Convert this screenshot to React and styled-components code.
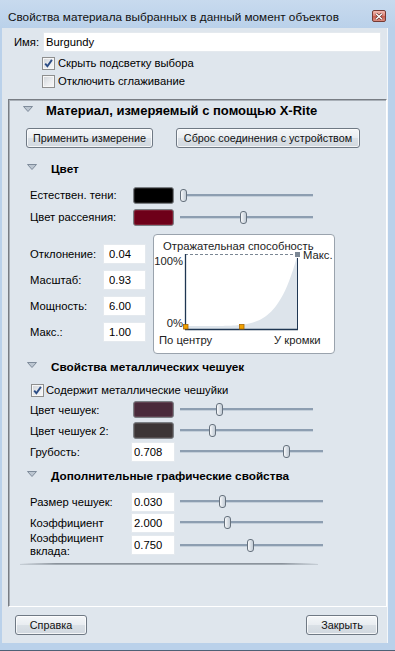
import React from 'react';
import styled, { createGlobalStyle } from 'styled-components';

const GlobalStyle = createGlobalStyle`
  html, body { margin: 0; padding: 0; }
  body {
    font-family: "Liberation Sans", Arial, sans-serif;
    font-size: 11.25px;
    color: #000;
    background: #bad1ea;
  }
  * { box-sizing: border-box; }
`;

const Window = styled.div`
  width: 395px;
  height: 651px;
  display: flex;
  flex-direction: column;
  background: #bad1ea;
  border-bottom: 1px solid #4e6176;
  overflow: hidden;
`;

const TitleBar = styled.div`
  flex: 0 0 28px;
  display: flex;
  align-items: center;
  justify-content: space-between;
  padding: 4px 9px 0 8px;
  background: linear-gradient(#c8daee, #bad1ea);
  font-size: 11.75px;
  color: #111;
  white-space: nowrap;
`;

const CloseBtn = styled.div`
  width: 14px;
  height: 12px;
  border: 1px solid #763a33;
  border-radius: 2px;
  background: linear-gradient(#f2b9b0, #dc8174 50%, #c95b4c 51%, #d98c80);
  display: flex;
  align-items: center;
  justify-content: center;
`;

const Client = styled.div`
  flex: 1;
  margin: 0 7px 7px 2px;
  background: #dfe6ed;
  display: flex;
  flex-direction: column;
  padding: 4px 0 8px 0;
  box-shadow: inset -1px 0 0 #f4f7fa;
`;

const NameRow = styled.div`
  height: 20px;
  display: flex;
  align-items: center;
  padding-left: 12px;
`;

const NameLabel = styled.span`
  width: 29px;
  flex: none;
`;

const TextField = styled.input`
  width: ${p => p.$w}px;
  height: ${p => p.$h || 20}px;
  flex: none;
  margin: 0;
  border: 1px solid #e4e9ee;
  background: #fff;
  font: inherit;
  color: #000;
  padding: 0 0 0 ${p => p.$pl ?? 2}px;
  outline: none;
`;

const CheckRow = styled.div`
  height: 18px;
  display: flex;
  align-items: center;
  gap: ${p => p.$gap ?? 3}px;
  padding-left: ${p => p.$pl}px;
  margin-top: ${p => p.$mt || 0}px;
`;

const CheckBoxFrame = styled.span`
  width: 13px;
  height: 13px;
  flex: none;
  border: 1px solid #8e8f8f;
  background: linear-gradient(135deg, #cfd3d8 0%, #eceef0 60%, #f8f8f8 100%);
  box-shadow: inset 0 0 0 1px #f7f7f7;
  display: flex;
  align-items: center;
  justify-content: center;
`;

const Panel = styled.div`
  flex: 1;
  margin: 9px 1px 0 6px;
  border: 1px solid;
  border-color: #787d84 #ffffff #ffffff #787d84;
  box-shadow: inset 1px 1px 0 #a9b0b8;
  display: flex;
  flex-direction: column;
  min-height: 0;
`;

const Header = styled.div`
  height: 20px;
  flex: none;
  display: flex;
  align-items: center;
  gap: ${p => p.$gap}px;
  padding-left: ${p => p.$pl}px;
  margin-top: ${p => p.$mt || 0}px;
  font-weight: bold;
  font-size: ${p => p.$size || 11.75}px;
`;

const TriIcon = styled.svg`
  flex: none;
  margin-bottom: 2px;
`;

const ActionRow = styled.div`
  height: 20px;
  display: flex;
  gap: 23px;
  padding-left: 17px;
  margin-top: 8px;
`;

const Button = styled.div`
  width: ${p => p.$w}px;
  height: 20px;
  flex: none;
  border: 1px solid #6f7984;
  border-radius: 3px;
  background: linear-gradient(#f5f7f9 0%, #e9edf1 48%, #dae0e6 52%, #d1d8df 100%);
  box-shadow: inset 0 0 0 1px rgba(255, 255, 255, 0.75);
  display: flex;
  align-items: center;
  justify-content: center;
  white-space: nowrap;
  font-size: 10.8px;
  color: #111;
`;

const Row = styled.div`
  height: ${p => p.$h || 21}px;
  flex: none;
  display: flex;
  align-items: center;
  padding-left: 21px;
  margin-top: ${p => p.$mt || 0}px;
`;

const Label = styled.span`
  width: ${p => p.$w}px;
  flex: none;
  line-height: ${p => p.$lh || 14}px;
`;

const Swatch = styled.span`
  width: 41px;
  height: 17px;
  flex: none;
  border: 1px solid #7b7f84;
  border-radius: 3px;
  background: ${p => p.$c};
  box-shadow: inset 0 0 0 1px rgba(255, 255, 255, 0.12);
`;

const SliderBox = styled.div`
  position: relative;
  width: ${p => p.$w}px;
  height: 13px;
  margin-left: ${p => p.$ml}px;
  flex: none;
  display: flex;
  align-items: center;
`;

const Track = styled.div`
  width: 100%;
  height: 2px;
  background: #8d9eb1;
  border-bottom: 1px solid #c4cfda;
  box-sizing: content-box;
`;

const Thumb = styled.div`
  position: absolute;
  top: 0;
  width: 7px;
  height: 13px;
  border: 1px solid #66717d;
  border-radius: 3px;
  background: linear-gradient(to right, #f8f9fb, #d5dce3 60%, #c3ccd6);
`;

const Block = styled.div`
  display: flex;
  padding-left: 21px;
  margin-top: 6px;
  height: 120px;
  flex: none;
`;

const FieldCol = styled.div`
  width: 116px;
  display: flex;
  flex-direction: column;
  gap: 6px;
  padding-top: 10px;
`;

const FieldRow = styled.div`
  height: 20px;
  display: flex;
  align-items: center;
`;

const ChartFrame = styled.div`
  width: 182px;
  height: 120px;
  margin-left: 7px;
  border: 1px solid #9aa3ad;
  border-radius: 4px;
  background: #fff;
  flex: none;
`;

const Separator = styled.div`
  width: 298px;
  height: 1px;
  margin: 6px 0 0 11px;
  background: linear-gradient(to right, rgba(140, 148, 157, 0), #8b939c 12%, #8b939c 88%, rgba(140, 148, 157, 0));
  border-bottom: 1px solid rgba(180, 188, 196, 0.6);
  box-sizing: content-box;
`;

const Footer = styled.div`
  height: 20px;
  display: flex;
  justify-content: space-between;
  padding: 0 10px 0 13px;
  margin-top: 8px;
`;

const Tri = () => (
  <TriIcon width="10" height="6" viewBox="0 0 10 6">
    <polygon points="0.5,0.5 9.5,0.5 5,5.5" fill="#bcc6d1" stroke="#7e8b9a" strokeWidth="1" />
  </TriIcon>
);

const Checkbox = ({ checked }) => (
  <CheckBoxFrame>
    {checked && (
      <svg width="9" height="9" viewBox="0 0 9 9">
        <path d="M1.2 4.6 L3.4 7.2 L7.9 0.9" fill="none" stroke="#2c4d86" strokeWidth="1.9" />
      </svg>
    )}
  </CheckBoxFrame>
);

const Slider = ({ w, ml, pos }) => (
  <SliderBox $w={w} $ml={ml}>
    <Track />
    <Thumb style={{ left: pos }} />
  </SliderBox>
);

const Chart = () => {
  const X0 = 31, X1 = 143, Y0 = 19, Y1 = 94;
  const pts = [];
  for (let i = 0; i <= 56; i++) {
    const t = i / 56;
    const r = Math.min(0.97, 0.04 + 0.93 * Math.pow(t, 6));
    pts.push(`${(X0 + t * (X1 - X0)).toFixed(2)},${(Y1 - r * (Y1 - Y0)).toFixed(2)}`);
  }
  const area = `M${X0},${Y1} L${pts.join(' L')} L${X1},${Y1} Z`;
  const txt = { fontFamily: '"Liberation Sans", Arial, sans-serif', fontSize: 11.25, fill: '#222' };
  return (
    <ChartFrame>
      <svg width="180" height="118" viewBox="0 0 180 118">
        <text x="9" y="15" {...txt}>Отражательная способность</text>
        <path d={area} fill="#dde4eb" />
        <line x1={X0} y1={Y0 + 0.5} x2={X1 - 2} y2={Y0 + 0.5} stroke="#7a8693" strokeDasharray="3 2" />
        <line x1={X0 + 0.5} y1={Y0} x2={X0 + 0.5} y2={Y1 + 1} stroke="#1f3652" strokeWidth="1.3" />
        <line x1={X0} y1={Y1 + 0.5} x2={X1 + 1} y2={Y1 + 0.5} stroke="#1f3652" strokeWidth="1.3" />
        <line x1={X1 + 0.5} y1={23} x2={X1 + 0.5} y2={Y1 + 1} stroke="#1f3652" strokeWidth="1" />
        <rect x="141" y="17" width="5" height="5" fill="#7b8794" />
        <rect x="29.5" y="89.5" width="4.5" height="4.5" fill="#f2a100" stroke="#a86800" strokeWidth="0.8" />
        <rect x="85.5" y="89.5" width="4.5" height="4.5" fill="#f2a100" stroke="#a86800" strokeWidth="0.8" />
        <text x="29" y="30" textAnchor="end" {...txt}>100%</text>
        <text x="29" y="91.5" textAnchor="end" {...txt}>0%</text>
        <text x="149" y="24" {...txt}>Макс.</text>
        <text x="5" y="109" {...txt}>По центру</text>
        <text x="120" y="109" {...txt}>У кромки</text>
      </svg>
    </ChartFrame>
  );
};

export default function App() {
  return (
    <>
      <GlobalStyle />
      <Window>
        <TitleBar>
          <span>Свойства материала выбранных в данный момент объектов</span>
          <CloseBtn>
            <svg width="8" height="7" viewBox="0 0 8 7">
              <path d="M1 0.8 L7 6.2 M7 0.8 L1 6.2" stroke="#5a2420" strokeWidth="2.6" />
              <path d="M1 0.8 L7 6.2 M7 0.8 L1 6.2" stroke="#ffffff" strokeWidth="1.5" />
            </svg>
          </CloseBtn>
        </TitleBar>
        <Client>
          <NameRow>
            <NameLabel>Имя:</NameLabel>
            <TextField $w={338} $pl={2} readOnly defaultValue="Burgundy" />
          </NameRow>
          <CheckRow $pl={40} $mt={2}>
            <Checkbox checked />
            <span>Скрыть подсветку выбора</span>
          </CheckRow>
          <CheckRow $pl={40}>
            <Checkbox />
            <span>Отключить сглаживание</span>
          </CheckRow>

          <Panel>
            <Header $pl={14} $gap={13} $size={13}>
              <Tri />
              Материал, измеряемый с помощью X-Rite
            </Header>
            <ActionRow>
              <Button $w={127}>Применить измерение</Button>
              <Button $w={184}>Сброс соединения с устройством</Button>
            </ActionRow>

            <Header $pl={18} $gap={14} $mt={10}>
              <Tri />
              Цвет
            </Header>
            <Row $h={22} $mt={6}>
              <Label $w={103}>Естествен. тени:</Label>
              <Swatch $c="#000000" />
              <Slider w={133} ml={6} pos={0} />
            </Row>
            <Row $h={22}>
              <Label $w={103}>Цвет рассеяния:</Label>
              <Swatch $c="#6e0019" />
              <Slider w={133} ml={6} pos={60} />
            </Row>

            <Block>
              <FieldCol>
                <FieldRow>
                  <Label $w={73}>Отклонение:</Label>
                  <TextField $w={43} $pl={5} readOnly defaultValue="0.04" />
                </FieldRow>
                <FieldRow>
                  <Label $w={73}>Масштаб:</Label>
                  <TextField $w={43} $pl={5} readOnly defaultValue="0.93" />
                </FieldRow>
                <FieldRow>
                  <Label $w={73}>Мощность:</Label>
                  <TextField $w={43} $pl={5} readOnly defaultValue="6.00" />
                </FieldRow>
                <FieldRow>
                  <Label $w={73}>Макс.:</Label>
                  <TextField $w={43} $pl={5} readOnly defaultValue="1.00" />
                </FieldRow>
              </FieldCol>
              <Chart />
            </Block>

            <Header $pl={18} $gap={14} $mt={2}>
              <Tri />
              Свойства металлических чешуек
            </Header>
            <CheckRow $pl={22} $gap={2} $mt={5}>
              <Checkbox checked />
              <span>Содержит металлические чешуйки</span>
            </CheckRow>
            <Row>
              <Label $w={103}>Цвет чешуек:</Label>
              <Swatch $c="#4a2a3b" />
              <Slider w={133} ml={6} pos={36} />
            </Row>
            <Row>
              <Label $w={103}>Цвет чешуек 2:</Label>
              <Swatch $c="#3c3536" />
              <Slider w={133} ml={6} pos={29} />
            </Row>
            <Row>
              <Label $w={101}>Грубость:</Label>
              <TextField $w={44} readOnly defaultValue="0.708" />
              <Slider w={143} ml={5} pos={103} />
            </Row>

            <Header $pl={18} $gap={14} $mt={3}>
              <Tri />
              Дополнительные графические свойства
            </Header>
            <Row $mt={6}>
              <Label $w={101}>Размер чешуек:</Label>
              <TextField $w={44} readOnly defaultValue="0.030" />
              <Slider w={143} ml={5} pos={39} />
            </Row>
            <Row>
              <Label $w={101}>Коэффициент</Label>
              <TextField $w={44} readOnly defaultValue="2.000" />
              <Slider w={143} ml={5} pos={44} />
            </Row>
            <Row $h={24}>
              <Label $w={101} $lh={13}>Коэффициент<br />вклада:</Label>
              <TextField $w={44} readOnly defaultValue="0.750" />
              <Slider w={143} ml={5} pos={67} />
            </Row>
            <Separator />
          </Panel>

          <Footer>
            <Button $w={72}>Справка</Button>
            <Button $w={72}>Закрыть</Button>
          </Footer>
        </Client>
      </Window>
    </>
  );
}
